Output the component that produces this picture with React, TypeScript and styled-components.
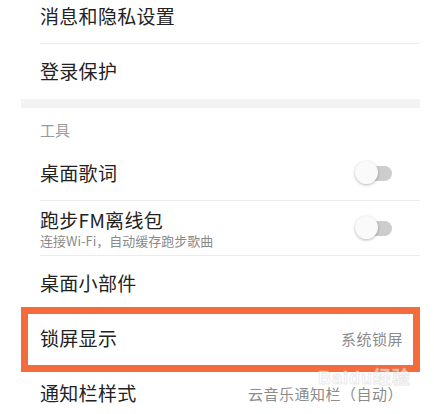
import styled, { createGlobalStyle } from "styled-components";

const GlobalStyle = createGlobalStyle`
  html, body {
    margin: 0;
    padding: 0;
    background: #ffffff;
    overflow: hidden;
  }
  body {
    font-family: "Noto Sans CJK SC", "Noto Sans", sans-serif;
  }
`;

const Page = styled.div`
  position: relative;
  width: 434px;
  height: 414px;
  overflow: hidden;
  background: #ffffff;
`;

const List = styled.div`
  margin: -11px 14px 0 21px;
  display: flex;
  flex-direction: column;
`;

const Row = styled.div<{ $divider?: boolean; $highlight?: boolean }>`
  position: relative;
  box-sizing: border-box;
  height: 55px;
  margin-left: 19px;
  padding-right: 17px;
  display: flex;
  align-items: center;
  justify-content: space-between;
  border-bottom: 1px solid ${(p) => (p.$divider ? "#ececec" : "transparent")};

  ${(p) =>
    p.$highlight &&
    `
    &::after {
      content: "";
      position: absolute;
      top: -4px;
      bottom: -7px;
      left: -19px;
      right: 0;
      border: 7px solid #f46b3c;
    }
  `}
`;

const TextBlock = styled.div`
  display: flex;
  flex-direction: column;
`;

const Title = styled.span`
  font-size: 19px;
  line-height: 24px;
  color: #222222;
  letter-spacing: 0.3px;
`;

const Subtitle = styled.span`
  font-size: 13px;
  line-height: 16px;
  color: #8a8a8a;
  margin-top: 1px;
`;

const Value = styled.span`
  font-size: 15px;
  color: #8c8c8c;
  letter-spacing: 0.5px;
`;

const SectionGap = styled.div`
  height: 9px;
  background: #f3f3f3;
`;

const SectionHeader = styled.div`
  box-sizing: border-box;
  height: 38px;
  padding: 13px 0 0 19px;
  font-size: 15px;
  line-height: 18px;
  color: #9a9a9a;
`;

const Toggle = styled.div`
  position: relative;
  width: 37px;
  height: 24px;
  margin-right: 11px;
  display: flex;
  align-items: center;
`;

const Track = styled.div`
  width: 34px;
  height: 15px;
  margin-left: 3px;
  border-radius: 8px;
  background: #cdcdcd;
`;

const Knob = styled.div`
  position: absolute;
  left: 0;
  top: 0;
  width: 23px;
  height: 23px;
  border-radius: 50%;
  background: #fafafa;
  box-shadow: 0 1px 3px rgba(0, 0, 0, 0.28);
`;

// faint Baidu watermark over the bottom-right corner
const Watermark = styled.div`
  position: absolute;
  left: 318px;
  top: 368px;
  font-family: "Liberation Sans", "Noto Sans CJK SC", sans-serif;
  font-size: 18px;
  line-height: 20px;
  font-weight: 700;
  color: rgba(255, 255, 255, 0.55);
  -webkit-text-stroke: 1px rgba(200, 200, 200, 0.4);
  pointer-events: none;
  letter-spacing: 1px;
`;

const Switch = () => (
  <Toggle>
    <Track />
    <Knob />
  </Toggle>
);

export default function App() {
  return (
    <Page>
      <GlobalStyle />
      <List>
        <Row $divider>
          <Title>消息和隐私设置</Title>
        </Row>
        <Row>
          <Title>登录保护</Title>
        </Row>
        <SectionGap />
        <SectionHeader>工具</SectionHeader>
        <Row $divider>
          <Title>桌面歌词</Title>
          <Switch />
        </Row>
        <Row $divider>
          <TextBlock>
            <Title>跑步FM离线包</Title>
            <Subtitle>连接Wi-Fi，自动缓存跑步歌曲</Subtitle>
          </TextBlock>
          <Switch />
        </Row>
        <Row $divider>
          <Title>桌面小部件</Title>
        </Row>
        <Row $divider $highlight>
          <Title>锁屏显示</Title>
          <Value>系统锁屏</Value>
        </Row>
        <Row>
          <Title>通知栏样式</Title>
          <Value>云音乐通知栏（自动）</Value>
        </Row>
      </List>
      <Watermark>Baidu经验</Watermark>
    </Page>
  );
}
